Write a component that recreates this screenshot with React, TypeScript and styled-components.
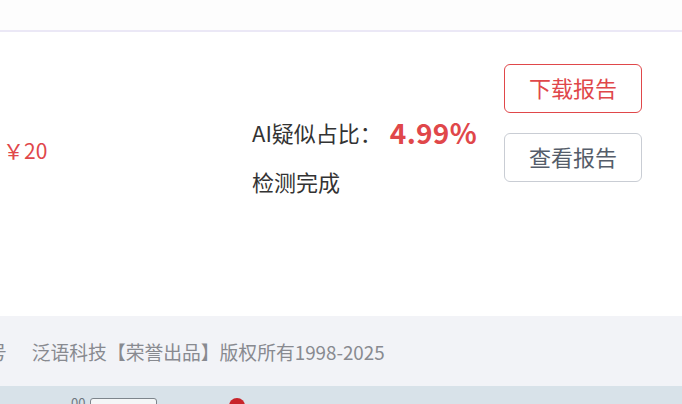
import React from "react";
import styled, { createGlobalStyle } from "styled-components";

const Global = createGlobalStyle`
  html, body { margin: 0; padding: 0; background: #ffffff; }
  body { font-family: "Noto Sans CJK SC", "Noto Sans", sans-serif; overflow: hidden; }
  * { box-sizing: border-box; }
`;

const Page = styled.div`
  width: 682px;
  height: 404px;
  display: flex;
  flex-direction: column;
  overflow: hidden;
`;

const TopBar = styled.div`
  height: 32px;
  flex: none;
  background: #fdfdfd;
  border-bottom: 2px solid #ebe8f6;
`;

const Card = styled.div`
  height: 284px;
  flex: none;
  background: #ffffff;
  display: flex;
  align-items: flex-start;
  padding-left: 3px;
`;

const Price = styled.div`
  width: 249px;
  margin-top: 104px;
  font-size: 21px;
  line-height: 28px;
  color: #e0474a;
`;

const Result = styled.div`
  width: 252px;
  margin-top: 82px;
  display: flex;
  flex-direction: column;
  gap: 13px;
`;

const ResultRow = styled.div`
  display: flex;
  align-items: center;
  height: 36px;
  font-size: 22px;
  color: #333333;
`;

const Rate = styled.span`
  margin-left: 8px;
  font-size: 28px;
  font-weight: 700;
  color: #e0474a;
  letter-spacing: 0.3px;
`;

const Actions = styled.div`
  margin-top: 32px;
  display: flex;
  flex-direction: column;
  gap: 20px;
`;

const Btn = styled.button<{ $primary?: boolean }>`
  width: 138px;
  height: 49px;
  border-radius: 6px;
  background: #ffffff;
  border: 1px solid ${(p) => (p.$primary ? "#e0474a" : "#c9cdd4")};
  color: ${(p) => (p.$primary ? "#e0474a" : "#555d6a")};
  font-family: "Noto Sans CJK SC", sans-serif;
  font-size: 22px;
  padding: 0 0 3px;
  display: flex;
  align-items: center;
  justify-content: center;
`;

const Footer = styled.div`
  height: 70px;
  flex: none;
  background: #f2f3f7;
  display: flex;
  align-items: center;
  font-size: 18.8px;
  color: #888a90;
  white-space: nowrap;
  overflow: hidden;
`;

const Cut = styled.span`
  margin-left: -12px;
  margin-right: 25px;
`;

const Strip = styled.div`
  flex: 1;
  background: #d8e2e9;
  position: relative;
  overflow: hidden;
`;

const Digits = styled.span`
  position: absolute;
  left: 71px;
  top: 10px;
  font-size: 13px;
  color: #6f7780;
  line-height: 13px;
`;

const Field = styled.div`
  position: absolute;
  left: 90px;
  top: 12px;
  width: 67px;
  height: 20px;
  border: 1.5px solid #7d858c;
  border-radius: 3px;
  background: #f4f6f7;
`;

const Dot = styled.div`
  position: absolute;
  left: 229px;
  top: 12px;
  width: 16px;
  height: 16px;
  border-radius: 50%;
  background: #c8242a;
`;

export default function App() {
  return (
    <Page>
      <Global />
      <TopBar />
      <Card>
        <Price>￥20</Price>
        <Result>
          <ResultRow>
            AI疑似占比：<Rate>4.99%</Rate>
          </ResultRow>
          <ResultRow>检测完成</ResultRow>
        </Result>
        <Actions>
          <Btn $primary>下载报告</Btn>
          <Btn>查看报告</Btn>
        </Actions>
      </Card>
      <Footer>
        <Cut>号</Cut>
        泛语科技【荣誉出品】版权所有1998-2025
      </Footer>
      <Strip>
        <Digits>00</Digits>
        <Field />
        <Dot />
      </Strip>
    </Page>
  );
}
